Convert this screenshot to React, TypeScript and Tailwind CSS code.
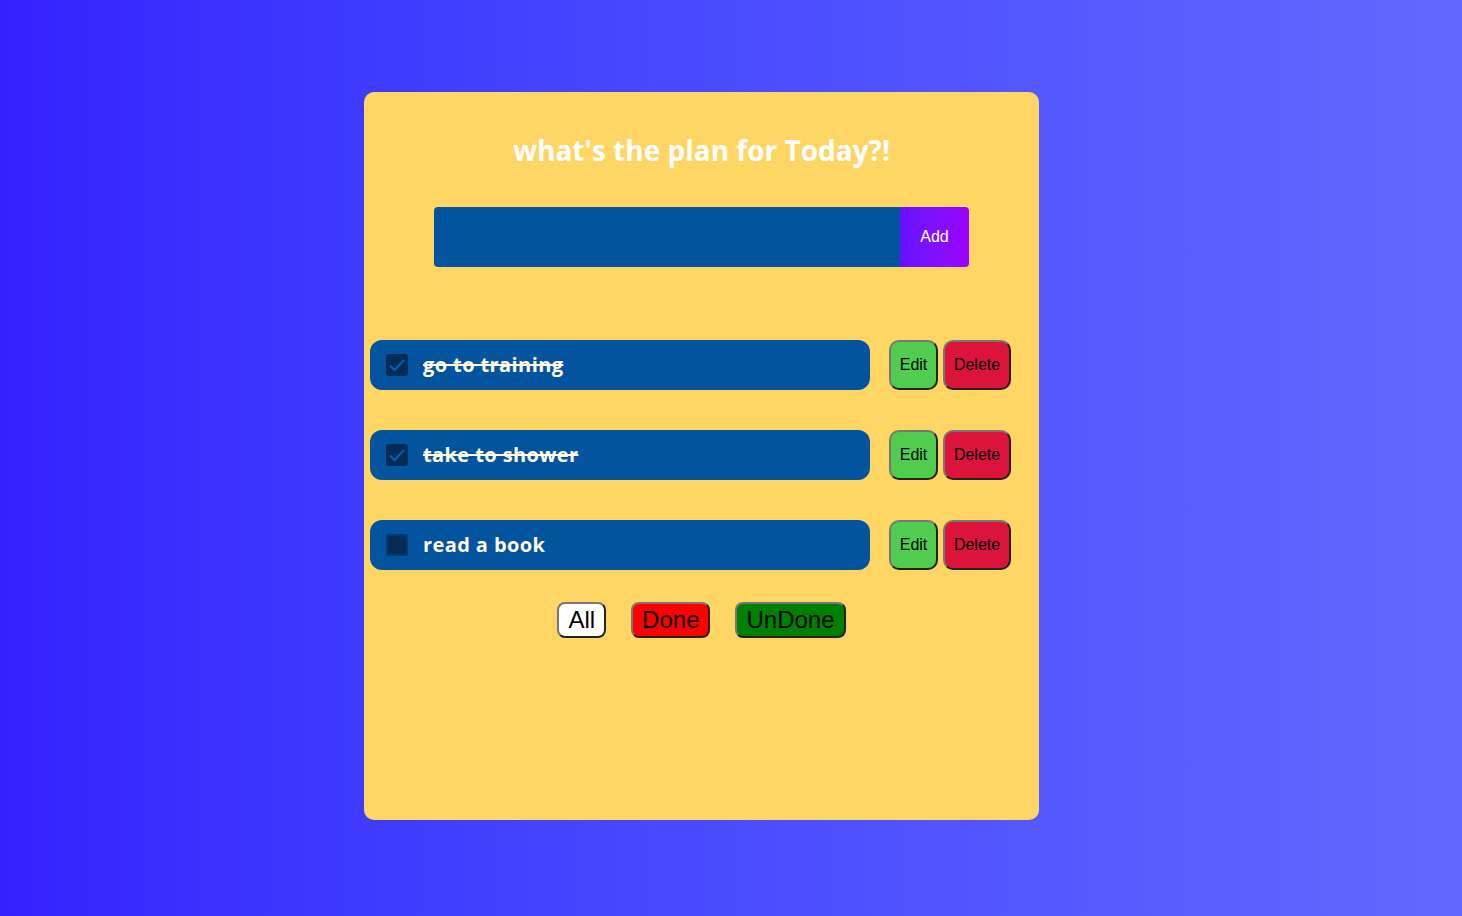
import { useState } from 'react';

interface Todo {
  id: number;
  text: string;
  done: boolean;
}

const initialTodos: Todo[] = [
  { id: 1, text: 'go to training', done: true },
  { id: 2, text: 'take to shower', done: true },
  { id: 3, text: 'read a book', done: false },
];

export default function App() {
  const [todos, setTodos] = useState<Todo[]>(initialTodos);

  const toggle = (id: number) =>
    setTodos(todos.map((t) => (t.id === id ? { ...t, done: !t.done } : t)));

  return (
    <div className="min-h-[916px] w-full bg-gradient-to-r from-[#3520ff] to-[#6467ff] pt-[92px]">
      <div className="ml-[364px] flex h-[728px] w-[675px] flex-col rounded-[10px] bg-[#ffd664] pt-[40px]">
        <h1 className="text-center font-['Open_Sans',sans-serif] text-[28px] leading-[36px] font-bold text-white">
          what's the plan for Today?!
        </h1>

        <div className="mx-auto mt-[39px] flex h-[60px] w-[535px]">
          <input
            type="text"
            className="h-full flex-1 rounded-l-[4px] bg-[#02549e] px-4 text-white outline-none"
          />
          <button className="h-full w-[69px] rounded-r-[4px] bg-gradient-to-r from-[#6510ff] to-[#9a00ff] font-['Liberation_Sans',Arial,sans-serif] text-[16px] text-white">
            Add
          </button>
        </div>

        <div className="mt-[73px] ml-[6px] flex flex-col gap-[40px]">
          {todos.map((todo) => (
            <div key={todo.id} className="flex h-[50px] items-center">
              <div className="flex h-full w-[500px] items-center rounded-[12px] bg-[#02549e] pl-[16px]">
                <button
                  onClick={() => toggle(todo.id)}
                  className="flex h-[22px] w-[22px] items-center justify-center rounded-[3px] bg-[#022b55]"
                >
                  {todo.done ? (
                    <svg width="20" height="20" viewBox="0 0 20 20" fill="none">
                      <path d="M3 10.5l4.5 4.5 9.5-10" stroke="#0b5aa6" strokeWidth="2.4" />
                    </svg>
                  ) : (
                    <span className="h-[22px] w-[22px] rounded-[3px] border-2 border-[#033a70]" />
                  )}
                </button>
                <span
                  className={`ml-[15px] font-['Open_Sans',sans-serif] text-[20px] font-bold tracking-[0.4px] text-[#fff9e6] ${
                    todo.done ? 'line-through' : ''
                  }`}
                >
                  {todo.text}
                </span>
              </div>
              <button className="ml-[19px] h-full w-[49px] rounded-[10px] border-2 border-t-[#777] border-r-[#222] border-b-[#222] border-l-[#777] bg-[#50cd4e] font-['Liberation_Sans',Arial,sans-serif] text-[16px] text-black">
                Edit
              </button>
              <button className="ml-[5px] h-full w-[68px] rounded-[10px] border-2 border-t-[#777] border-r-[#222] border-b-[#222] border-l-[#777] bg-[#dc143c] font-['Liberation_Sans',Arial,sans-serif] text-[16px] text-black">
                Delete
              </button>
            </div>
          ))}
        </div>

        <div className="mt-[32px] flex justify-center gap-[25px] font-['Liberation_Sans',Arial,sans-serif] text-[24px] leading-[28px] text-black">
          <button className="h-[36px] rounded-[8px] border-2 border-t-[#777] border-r-[#222] border-b-[#222] border-l-[#777] bg-white px-[9px]">
            All
          </button>
          <button className="h-[36px] rounded-[8px] border-2 border-t-[#777] border-r-[#222] border-b-[#222] border-l-[#777] bg-[#ff0000] px-[9px]">
            Done
          </button>
          <button className="h-[36px] rounded-[8px] border-2 border-t-[#777] border-r-[#222] border-b-[#222] border-l-[#777] bg-[#008000] px-[9px]">
            UnDone
          </button>
        </div>
      </div>
    </div>
  );
}
